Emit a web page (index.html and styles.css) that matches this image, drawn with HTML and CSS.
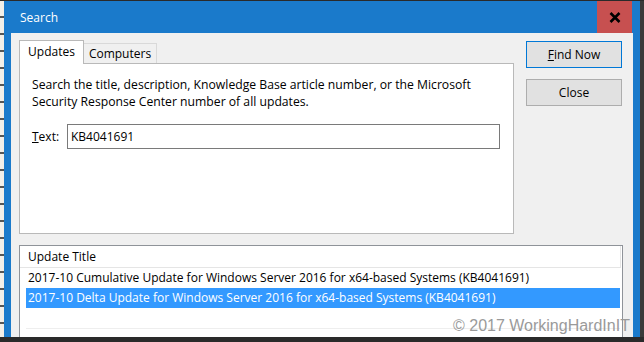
FILE: index.html
```html
<!DOCTYPE html>
<html>
<head>
    <link rel="stylesheet" href="styles.css">
</head>

<body>
    <div class="desktop">
        <div class="behind"></div>
        <div class="window">
            <div class="titlebar">
                <span class="title">Search</span>
                <span class="close-btn">
                    <svg width="12" height="11" viewBox="0 0 12 11">
                        <path d="M1.5 1 L10.5 10 M10.5 1 L1.5 10" stroke="#000" stroke-width="2.6" fill="none"/>
                    </svg>
                </span>
            </div>
            <div class="dialog">
                <div class="top-row">
                    <div class="tabs">
                        <div class="tab-strip">
                            <div class="tab active">Updates</div>
                            <div class="tab">Computers</div>
                        </div>
                        <div class="tab-panel">
                            <p class="hint">Search the title, description, Knowledge Base article number, or the Microsoft<br>Security Response Center number of all updates.</p>
                            <div class="field">
                                <label for="textInput"><u>T</u>ext:</label>
                                <input type="text" id="textInput" value="KB4041691">
                            </div>
                        </div>
                    </div>
                    <div class="btn-column">
                        <button type="button" class="default"><u>F</u>ind Now</button>
                        <button type="button">Close</button>
                    </div>
                </div>
                <div class="results">
                    <div class="col-header">Update Title</div>
                    <div class="row">2017-10 Cumulative Update for Windows Server 2016 for x64-based Systems (KB4041691)</div>
                    <div class="row selected">2017-10 Delta Update for Windows Server 2016 for x64-based Systems (KB4041691)</div>
                    <div class="row empty"></div>
                </div>
            </div>
        </div>
        <div class="edge"></div>
    </div>
    <div class="watermark">© 2017 WorkingHardInIT</div>
</body>
</html>
```

FILE: styles.css
```css
body {
    margin: 0;
    width: 644px;
    height: 342px;
    overflow: hidden;
    background: #2a2a2a;
    font-family: "Open Sans", "Noto Sans", sans-serif;
    font-size: 12px;
    color: #000;
    position: relative;
}

.desktop {
    display: flex;
    height: 336px;
    margin-top: 1px;
}

.behind {
    width: 4px;
    background: repeating-linear-gradient(to bottom, #f2efe8 0, #f2efe8 15px, #555 15px, #555 17px);
}

.edge {
    width: 4px;
    background: #3a3a3a;
}

.window {
    flex: 1;
    display: flex;
    flex-direction: column;
    background: #1a7acb;
    padding: 0 7px;
    min-width: 0;
}

.titlebar {
    height: 32px;
    display: flex;
    align-items: center;
}

.titlebar .title {
    padding-left: 9px;
    color: #fff;
    font-size: 12px;
}

.close-btn {
    margin-left: auto;
    margin-right: 1px;
    width: 35px;
    height: 32px;
    background: #c75050;
    display: flex;
    align-items: center;
    justify-content: center;
}

.dialog {
    flex: 1;
    display: flex;
    flex-direction: column;
    background: #f0f0f0;
    padding: 7px 11px 0 8px;
    min-height: 0;
    overflow: hidden;
}

.top-row {
    display: flex;
    align-items: flex-start;
}

.tabs {
    width: 495px;
}

.tab-strip {
    display: flex;
    align-items: flex-end;
    height: 23px;
}

.tab {
    box-sizing: border-box;
    height: 20px;
    width: 74px;
    margin-left: -1px;
    border: 1px solid #d9d9d9;
    border-bottom: none;
    background: #f0f0f0;
    text-align: center;
    line-height: 19px;
}

.tab.active {
    position: relative;
    z-index: 1;
    height: 24px;
    width: 65px;
    margin-left: 0;
    margin-bottom: -1px;
    background: #fff;
    border-color: #b9b9b9;
    line-height: 22px;
}

.tab-panel {
    box-sizing: border-box;
    height: 171px;
    background: #fff;
    border: 1px solid #b9b9b9;
    padding: 12px 12px 0 12px;
}

.hint {
    margin: 0;
    line-height: 17px;
    font-size: 12.2px;
}

.field {
    display: flex;
    align-items: center;
    margin-top: 14px;
}

.field label {
    width: 35px;
}

.field input {
    box-sizing: border-box;
    width: 433px;
    height: 25px;
    border: 1px solid #7a7a7a;
    padding: 0 3px;
    font-family: inherit;
    font-size: 12px;
    color: #000;
}

.btn-column {
    display: flex;
    flex-direction: column;
    gap: 11px;
    margin-left: 12px;
    padding-top: 1px;
    width: 96px;
}

.btn-column button {
    box-sizing: border-box;
    height: 27px;
    border: 1px solid #adadad;
    background: #e1e1e1;
    font-family: inherit;
    font-size: 12px;
    color: #000;
    padding: 0;
}

.btn-column button.default {
    border-color: #0078d7;
}

.results {
    flex: 1;
    margin-top: 11px;
    margin-right: -1px;
    background: #fff;
    border: 1px solid #8f9399;
    border-bottom: none;
}

.col-header {
    height: 21px;
    line-height: 21px;
    padding-left: 8px;
    border-bottom: 1px solid #e5e5e5;
    margin-right: 1px;
    border-right: 1px solid #e5e5e5;
}

.row {
    height: 20px;
    line-height: 20px;
    margin: 0 2px 0 6px;
    padding-left: 2px;
    white-space: nowrap;
}

.row.selected {
    background: #3399ff;
    color: #fff;
}

.row.empty {
    border-bottom: 1px solid #eeeeee;
}

.watermark {
    position: absolute;
    left: 453px;
    top: 317px;
    font-family: "Liberation Sans", sans-serif;
    font-size: 16px;
    color: #9a9a9a;
}
```
